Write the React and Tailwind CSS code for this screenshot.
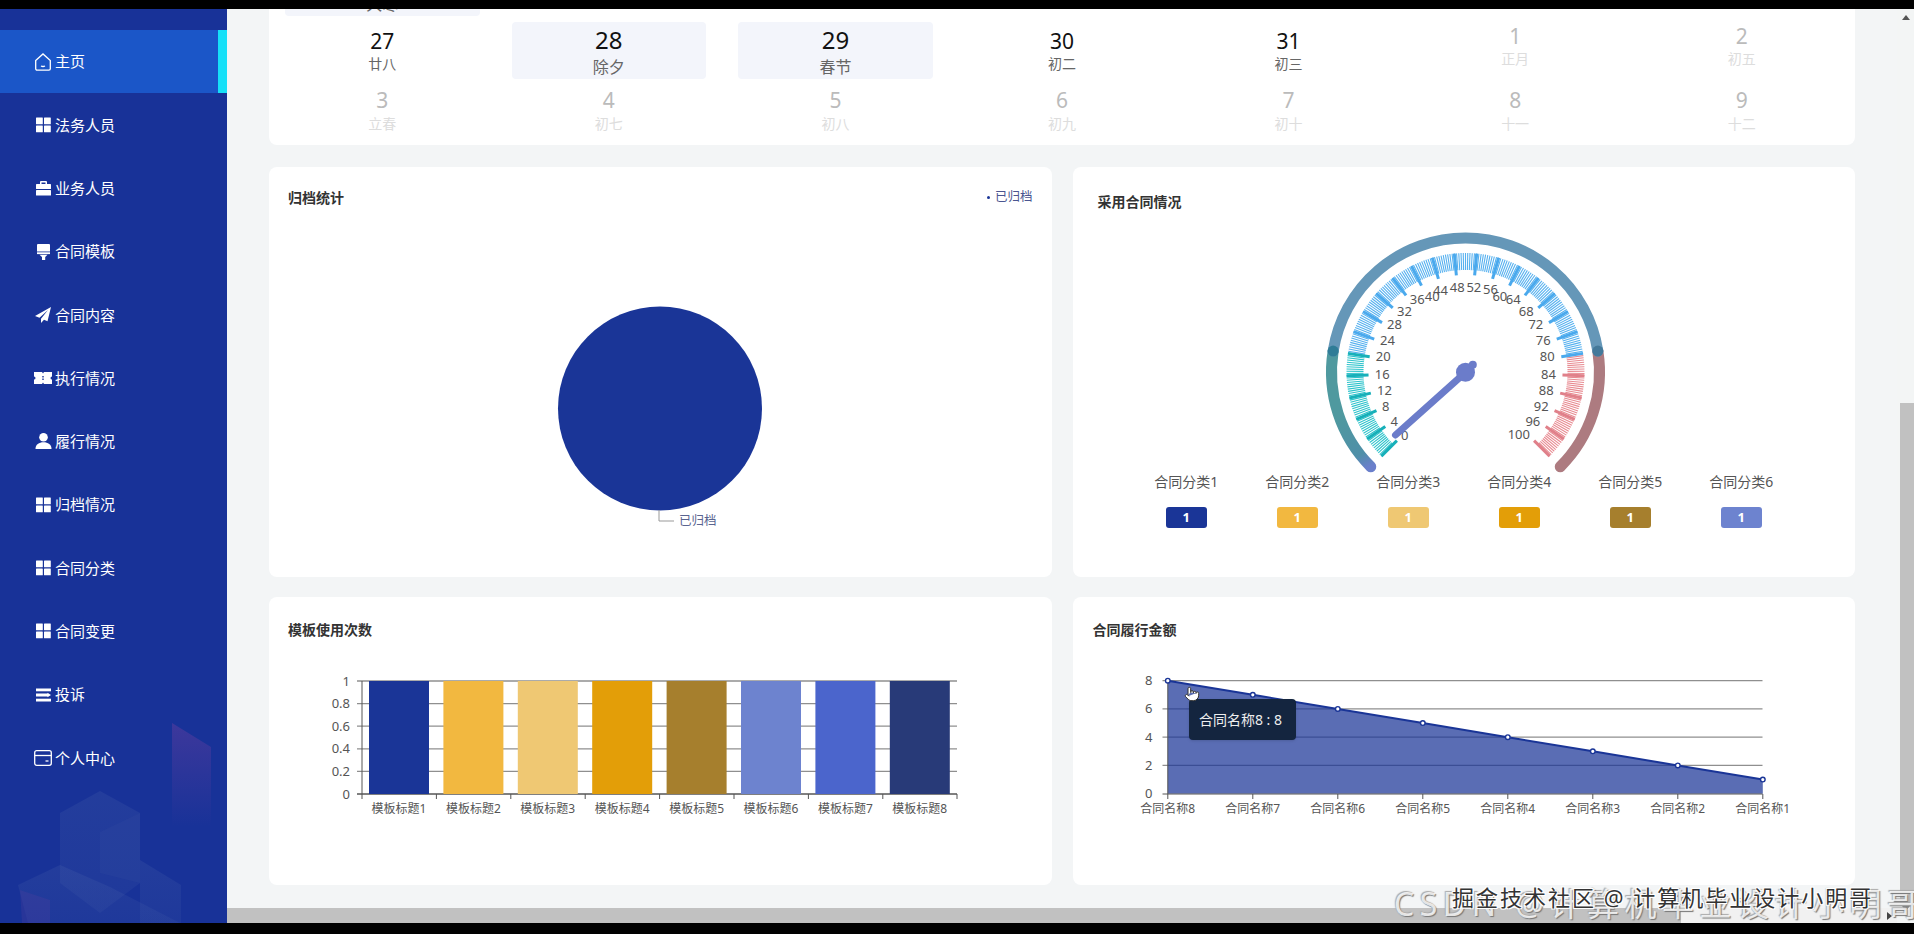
import React from 'react';
import { Pointer } from 'lucide-react';

const COLORS = ['#1a3597', '#f2b840', '#efc873', '#e39e08', '#a67f2d', '#6d83cf', '#4b65cc', '#283a78'];

function HomeIcon() {
  return (
    <svg width="18" height="18" viewBox="0 0 18 18" fill="none" stroke="white" strokeWidth="1.3">
      <path d="M1.7 7.6 9 .9l7.3 6.7v8.2a1.4 1.4 0 0 1-1.4 1.4H3.1a1.4 1.4 0 0 1-1.4-1.4z" />
      <path d="M7 13q2 1 4 0" />
    </svg>
  );
}

function GridIcon() {
  return (
    <svg width="18" height="16" viewBox="0 0 18 16" fill="white">
      <rect x="2" y="0.5" width="6.8" height="6.8" rx="0.5" />
      <rect x="10" y="0.5" width="6.8" height="6.8" rx="0.5" />
      <rect x="2" y="8.5" width="6.8" height="6.8" rx="0.5" />
      <rect x="10" y="8.5" width="6.8" height="6.8" rx="0.5" />
    </svg>
  );
}

function BriefcaseIcon() {
  return (
    <svg width="18" height="15" viewBox="0 0 18 15" fill="white">
      <path d="M6 3V1.2C6 .5 6.500 0 7.200 0h4.600C12.500 0 13 .5 13 1.200V3h-1.500V1.500h-4V3z" />
      <rect x="2" y="3" width="15" height="5" rx="0.6" />
      <rect x="2" y="9" width="15" height="5.500" rx="0.6" />
    </svg>
  );
}

function BrushIcon() {
  return (
    <svg width="18" height="16" viewBox="0 0 18 16" fill="white">
      <path d="M3 1a1 1 0 0 1 1-1h11a1 1 0 0 1 1 1v6.500H3z" />
      <rect x="3" y="8.300" width="13" height="1.800" />
      <path d="M5.500 10.800h8L11.200 13v3H8v-3z" />
    </svg>
  );
}

function PlaneIcon() {
  return (
    <svg width="18" height="16" viewBox="0 0 18 16" fill="white">
      <path d="M17 0 1 9l4.500 1.800L14 3l-7 8.700V16l3-3.200 3.500 1.400z" />
    </svg>
  );
}

function TicketIcon() {
  return (
    <svg width="18" height="12" viewBox="0 0 18 12" fill="white" fillRule="evenodd">
      <path d="M0 0h8l1 1.500L10 0h8v4.500a1.500 1.500 0 0 0 0 3V12h-8l-1-1.500L8 12H0V7.500a1.500 1.500 0 0 0 0-3zM8.300 4v1.500h1.400V4zM8.300 6.500V8h1.400V6.500z" />
    </svg>
  );
}

function UserIcon() {
  return (
    <svg width="18" height="16" viewBox="0 0 18 16" fill="white">
      <circle cx="9.500" cy="4.300" r="4.300" />
      <path d="M1.500 16c0-4.500 3.500-6.700 8-6.700s8 2.200 8 6.700z" />
    </svg>
  );
}

function MenuIcon() {
  return (
    <svg width="18" height="14" viewBox="0 0 18 14" fill="white">
      <rect x="2" y="0.500" width="15" height="2.800" />
      <path d="M2 5.600h11.500V4.700L17 7l-3.500 2.300v-.9H2z" />
      <rect x="2" y="10.700" width="15" height="2.800" />
    </svg>
  );
}

function WalletIcon() {
  return (
    <svg width="18" height="16" viewBox="0 0 18 16" fill="none" stroke="white" strokeWidth="1.300">
      <rect x="0.700" y="0.700" width="16.600" height="14.600" rx="2" />
      <path d="M.7 5.500h16.600" />
      <path d="M11.500 11h3" />
    </svg>
  );
}

const MENU = [
  { label: '主页', icon: <HomeIcon />, active: true },
  { label: '法务人员', icon: <GridIcon /> },
  { label: '业务人员', icon: <BriefcaseIcon /> },
  { label: '合同模板', icon: <BrushIcon /> },
  { label: '合同内容', icon: <PlaneIcon /> },
  { label: '执行情况', icon: <TicketIcon /> },
  { label: '履行情况', icon: <UserIcon /> },
  { label: '归档情况', icon: <GridIcon /> },
  { label: '合同分类', icon: <GridIcon /> },
  { label: '合同变更', icon: <GridIcon /> },
  { label: '投诉', icon: <MenuIcon /> },
  { label: '个人中心', icon: <WalletIcon /> },
];

function Sidebar() {
  return (
    <div className="relative w-[227px] shrink-0 overflow-hidden bg-[#183298] pt-[21px]">
      <svg className="absolute bottom-0 left-0" width="227" height="210" viewBox="0 713 227 210">
        <defs>
          <linearGradient id="purple" x1="0" y1="0" x2="0" y2="1">
            <stop offset="0" stopColor="#6a3fa0" stopOpacity="0.45" />
            <stop offset="1" stopColor="#6a3fa0" stopOpacity="0" />
          </linearGradient>
          <linearGradient id="cube" x1="0" y1="0" x2="0" y2="1">
            <stop offset="0" stopColor="#6f86b8" stopOpacity="0.13" />
            <stop offset="1" stopColor="#6f86b8" stopOpacity="0.08" />
          </linearGradient>
        </defs>
        <path d="M172 723l39 24v80h-39z" fill="url(#purple)" />
        <path d="M60 813l40-22 40 22v70l-40 30-40-30z" fill="url(#cube)" />
        <path d="M100 832l40-19v70l-40-10z" fill="#6f86b8" fillOpacity="0.05" />
        <path d="M18 885l42-20 50 22 70 36H28z" fill="url(#cube)" />
        <path d="M140 860l41 25v38h-41z" fill="url(#cube)" />
        <path d="M20 890l30 10v23H22z" fill="#6a3fa0" fillOpacity="0.2" />
      </svg>
      <div className="relative">
        {MENU.map((m) => (
          <div
            key={m.label}
            className={
              m.active
                ? 'flex h-[63.3px] items-center gap-[3px] border-r-[9px] border-[#16e0f8] bg-[#1b56c8] pl-[34px] text-[15px] text-white'
                : 'flex h-[63.3px] items-center gap-[3px] pl-[34px] text-[15px] text-white'
            }
          >
            {m.icon}
            <span>{m.label}</span>
          </div>
        ))}
      </div>
    </div>
  );
}

const ROWS = [
  [
    ['20', '大寒', 'holiday'], ['21', '廿二', 'now'], ['22', '廿三', 'now'], ['23', '廿四', 'now'],
    ['24', '廿五', 'now'], ['25', '廿六', 'now'], ['26', '廿七', 'now'],
  ],
  [
    ['27', '廿八', 'now'], ['28', '除夕', 'holiday'], ['29', '春节', 'holiday'], ['30', '初二', 'now'],
    ['31', '初三', 'now'], ['1', '正月', 'next'], ['2', '初五', 'next'],
  ],
  [
    ['3', '立春', 'later'], ['4', '初七', 'later'], ['5', '初八', 'later'], ['6', '初九', 'later'],
    ['7', '初十', 'later'], ['8', '十一', 'later'], ['9', '十二', 'later'],
  ],
];

function DayCell({ day, lunar, kind }) {
  if (kind === 'holiday') {
    return (
      <div className="mx-[16px] flex h-[57px] flex-col items-center rounded bg-[#f3f5fb] pt-[6px]">
        <div className="text-[24px] leading-[24px] text-[#111]">{day}</div>
        <div className="mt-[3px] text-[16px] leading-[24px] text-[#666]">{lunar}</div>
      </div>
    );
  }
  if (kind === 'now') {
    return (
      <div className="mx-[16px] flex h-[57px] flex-col items-center pt-[7px]">
        <div className="text-[21px] leading-[24px] text-[#111]">{day}</div>
        <div className="text-[14px] leading-[22px] text-[#666]">{lunar}</div>
      </div>
    );
  }
  return (
    <div className={kind === 'next' ? 'mx-[16px] flex h-[57px] flex-col items-center pt-[2px]' : 'mx-[16px] flex h-[57px] flex-col items-center pt-[3px]'}>
      <div className="text-[21px] leading-[24px] text-[#bbb]">{day}</div>
      <div className={kind === 'next' ? 'text-[14px] leading-[22px] text-[#ddd]' : 'mt-px text-[14px] leading-[22px] text-[#ddd]'}>{lunar}</div>
    </div>
  );
}

function Calendar() {
  return (
    <div className="-mt-[50px] grid grid-cols-7 gap-y-[6px] rounded-lg bg-white pb-[3px]">
      {ROWS.flat().map(([day, lunar, kind]) => (
        <DayCell key={day} day={day} lunar={lunar} kind={kind} />
      ))}
    </div>
  );
}

function PieCard() {
  return (
    <div className="h-[410px] rounded-lg bg-white">
      <div className="flex h-[64px] items-center justify-between pb-[4px] pl-[19px] pr-[19px]">
        <div className="text-[14px] font-bold text-[#333]">归档统计</div>
        <div className="flex items-center gap-[5px] text-[12.5px] text-[#4a5590]">
          <span className="h-[3px] w-[3px] rounded-full bg-[#1a3597]" />
          已归档
        </div>
      </div>
      <svg className="block h-[346px] w-full" viewBox="269 231 782.5 346">
        <circle cx="660" cy="408.500" r="102" fill="#1a3597" />
        <path d="M659 510v11h15" fill="none" stroke="#999" strokeWidth="1" />
        <text x="679" y="525" fontSize="12.500" fill="#5a6490">已归档</text>
      </svg>
    </div>
  );
}

const GX = 1465;
const GY = 372;

function gaugePoint(v, r) {
  const a = ((225 - v * 2.7) * Math.PI) / 180;
  return [GX + r * Math.cos(a), GY - r * Math.sin(a)];
}

function arcPath(v1, v2, r) {
  const [x1, y1] = gaugePoint(v1, r);
  const [x2, y2] = gaugePoint(v2, r);
  return `M${x1} ${y1}A${r} ${r} 0 0 1 ${x2} ${y2}`;
}

const GAUGE_LABELS = [
  ['0', 313, 645], ['4', 281, 604], ['8', 256, 558], ['12', 252, 511], ['16', 245, 461], ['20', 248, 409],
  ['24', 261, 360], ['28', 282, 313], ['32', 312, 272], ['36', 350, 236], ['40', 395, 228], ['44', 420, 210],
  ['48', 470, 200], ['52', 520, 200], ['56', 570, 208], ['60', 598, 228], ['64', 638, 236], ['68', 677, 272],
  ['72', 706, 313], ['76', 728, 360], ['80', 740, 409], ['84', 744, 461], ['88', 737, 511], ['92', 722, 558],
  ['96', 697, 604], ['100', 655, 643],
];

function Gauge() {
  const fine = [];
  for (let i = 0; i <= 250; i++) {
    const v = i * 0.4;
    const [x1, y1] = gaugePoint(v, 119);
    const [x2, y2] = gaugePoint(v, 102);
    const c = v <= 20 ? '#2cc3cb' : v <= 80 ? '#57b1ef' : '#e88b92';
    fine.push(<line key={i} x1={x1} y1={y1} x2={x2} y2={y2} stroke={c} strokeWidth="1.100" />);
  }
  const major = [];
  for (let v = 0; v <= 100; v += 4) {
    const [x1, y1] = gaugePoint(v, 119);
    const [x2, y2] = gaugePoint(v, 97);
    const c = v <= 20 ? '#17b0b9' : v <= 80 ? '#4aa9ed' : '#e0808a';
    major.push(<line key={v} x1={x1} y1={y1} x2={x2} y2={y2} stroke={c} strokeWidth="3" />);
  }
  const [jx1, jy1] = gaugePoint(20, 134);
  const [jx2, jy2] = gaugePoint(80, 134);
  return (
    <svg className="block h-[245px] w-full overflow-visible" viewBox="1072.500 225 782.500 245">
      <defs>
        <linearGradient id="leftArc" gradientUnits="userSpaceOnUse" x1="1368" y1="467" x2="1340" y2="415">
          <stop offset="0" stopColor="#6a7fcb" />
          <stop offset="0.25" stopColor="#4f8fa8" />
          <stop offset="1" stopColor="#4f999f" />
        </linearGradient>
      </defs>
      <g fill="none" strokeWidth="11" strokeLinecap="round">
        <path d={arcPath(0, 20, 134)} stroke="url(#leftArc)" />
        <path d={arcPath(80, 100, 134)} stroke="#ad7b80" />
        <path d={arcPath(20, 80, 134)} stroke="#6597b8" />
      </g>
      <circle cx={jx1} cy={jy1} r="5.500" fill="#2f7c97" />
      <circle cx={jx2} cy={jy2} r="5.500" fill="#44799a" />
      {fine}
      {major}
      {GAUGE_LABELS.map(([t, zx, zy]) => (
        <text key={t} x={1300 + zx / 3} y={220 + zy / 3 + 5} fontSize="13" fill="#555" textAnchor="middle">
          {t}
        </text>
      ))}
      <path d="M1395 435 1465 372.300" stroke="#6b7cca" strokeWidth="7" strokeLinecap="round" />
      <circle cx="1465" cy="372.300" r="9.500" fill="#6b7cca" />
      <circle cx="1472.300" cy="364.700" r="4" fill="#6b7cca" />
    </svg>
  );
}

function GaugeCard() {
  const cats = [0, 1, 2, 3, 4, 5];
  return (
    <div className="h-[410px] rounded-lg bg-white">
      <div className="flex h-[58px] items-center pl-[25px] pt-[10px] text-[14px] font-bold text-[#333]">采用合同情况</div>
      <Gauge />
      <div className="mx-auto grid w-[666px] grid-cols-6">
        {cats.map((i) => (
          <div key={i} className="flex flex-col items-center">
            <div className="text-[14px] leading-[24px] text-[#555]">合同分类{i + 1}</div>
            <div
              className="mt-[13px] flex h-[21px] w-[41px] items-center justify-center rounded-[3px] text-[13px] font-bold text-white"
              style={{ background: COLORS[i] }}
            >
              1
            </div>
          </div>
        ))}
      </div>
    </div>
  );
}

function BarCard() {
  const ticks = ['1', '0.8', '0.6', '0.4', '0.2', '0'];
  const step = 22.600;
  const cat = 74.400;
  return (
    <div className="h-[288px] rounded-lg bg-white">
      <div className="flex h-[68px] items-center pb-[4px] pl-[19px] text-[14px] font-bold text-[#333]">模板使用次数</div>
      <svg className="block h-[220px] w-full" viewBox="269 665 782.500 220">
        {ticks.map((t, i) => (
          <g key={t}>
            <line x1="357" x2="957" y1={681 + i * step} y2={681 + i * step} stroke="#8f8f8f" strokeWidth="1.300" />
            <text x="350" y={681 + i * step + 4.500} fontSize="13" fill="#555" textAnchor="end">{t}</text>
          </g>
        ))}
        <line x1="362" x2="362" y1="681" y2="794" stroke="#555" />
        <line x1="357" x2="957" y1="794" y2="794" stroke="#555" />
        {COLORS.map((c, i) => (
          <g key={c}>
            <rect x={369 + i * cat} y="681" width="60" height="113" fill={c} />
            <line x1={362 + i * cat} x2={362 + i * cat} y1="794" y2="799" stroke="#555" />
            <text x={399 + i * cat} y="813" fontSize="12" fill="#555" textAnchor="middle">模板标题{i + 1}</text>
          </g>
        ))}
        <line x1="957" x2="957" y1="794" y2="799" stroke="#555" />
      </svg>
    </div>
  );
}

function LineCard() {
  const x = (i) => 1167.300 + i * 85;
  const y = (v) => 793.700 - v * 14.125;
  const vals = [8, 7, 6, 5, 4, 3, 2, 1];
  const line = vals.map((v, i) => `${x(i)},${y(v)}`).join(' ');
  return (
    <div className="relative h-[288px] rounded-lg bg-white">
      <div className="flex h-[68px] items-center pb-[4px] pl-5 text-[14px] font-bold text-[#333]">合同履行金额</div>
      <svg className="block h-[220px] w-full" viewBox="1072.500 665 782.500 220">
        {[8, 6, 4, 2].map((v) => (
          <line key={v} x1="1162" x2="1762" y1={y(v)} y2={y(v)} stroke="#8f8f8f" strokeWidth="1.300" />
        ))}
        <polygon points={`${x(0)},${y(0)} ${line} ${x(7)},${y(0)}`} fill="#1a3597" fillOpacity="0.72" />
        <line x1="1167.300" x2="1167.300" y1="681" y2="794" stroke="#555" />
        <line x1="1162" x2="1762" y1="794" y2="794" stroke="#555" />
        <polyline points={line} fill="none" stroke="#1a3597" strokeWidth="2" />
        {[8, 6, 4, 2, 0].map((v) => (
          <text key={v} x="1152" y={y(v) + 4.500} fontSize="13" fill="#555" textAnchor="end">{v}</text>
        ))}
        {vals.map((v, i) => (
          <g key={v}>
            <circle cx={x(i)} cy={y(v)} r="2.300" fill="white" stroke="#1a3597" strokeWidth="1.400" />
            <line x1={x(i)} x2={x(i)} y1="794" y2="799" stroke="#555" />
            <text x={x(i)} y="813" fontSize="12" fill="#555" textAnchor="middle">合同名称{v}</text>
          </g>
        ))}
      </svg>
      <div className="absolute left-[116px] top-[102px] flex h-[41px] w-[107px] items-center justify-center rounded bg-[#14253f] pr-[3px] text-[14px] text-[#eee] shadow">
        合同名称8 : 8
      </div>
      <Pointer className="absolute left-[111px] top-[89px]" size={16} fill="white" stroke="#333" strokeWidth={1.500} />
    </div>
  );
}

function VerticalScroll() {
  return (
    <div className="flex w-[17px] shrink-0 flex-col items-center bg-[#f3f5f5]">
      <div className="mt-[6px] h-0 w-0 border-x-[4px] border-b-[5px] border-x-transparent border-b-[#555]" />
      <div className="mt-[383px] ml-[3px] h-[500px] w-[14px] bg-[#c1c1c1]" />
      <div className="mt-[3px] h-0 w-0 border-x-[4px] border-t-[5px] border-x-transparent border-t-[#888]" />
    </div>
  );
}

function HorizontalScroll() {
  return (
    <div className="flex h-[15px] shrink-0 items-center justify-between bg-[#f1f1f1] pr-[5px]">
      <div className="h-full w-[1454px] bg-[#c1c1c1]" />
      <div className="h-0 w-0 border-y-[4px] border-l-[5px] border-y-transparent border-l-[#444]" />
    </div>
  );
}

export default function App() {
  return (
    <div className="relative h-[934px] w-[1914px] overflow-hidden bg-black font-['Noto_Sans','Noto_Sans_CJK_SC',sans-serif]">
      <div className="mt-[9px] flex h-[914px]">
        <Sidebar />
        <div className="flex min-w-0 flex-1 flex-col">
          <div className="min-h-0 flex-1 overflow-hidden bg-[#f3f5f6] px-[42px]">
            <Calendar />
            <div className="mt-[22px] grid grid-cols-2 gap-x-[21px] gap-y-[20px]">
              <PieCard />
              <GaugeCard />
              <BarCard />
              <LineCard />
            </div>
          </div>
          <HorizontalScroll />
        </div>
        <VerticalScroll />
      </div>
      <div className="absolute left-[1394px] top-[884px] whitespace-nowrap text-[32px] leading-[40px] tracking-[5.5px] text-white/80 [text-shadow:1px_1px_1px_#777,-1px_-1px_1px_#aaa]">
        CSDN @计算机毕业设计小明哥
      </div>
      <div className="absolute left-[1452px] top-[881px] whitespace-nowrap text-[22px] leading-[32px] tracking-[2px] text-[#333] [text-shadow:1px_1px_0_#fff,-1px_-1px_0_#fff,1px_-1px_0_#fff,-1px_1px_0_#fff]">
        掘金技术社区 @ 计算机毕业设计小明哥
      </div>
    </div>
  );
}
